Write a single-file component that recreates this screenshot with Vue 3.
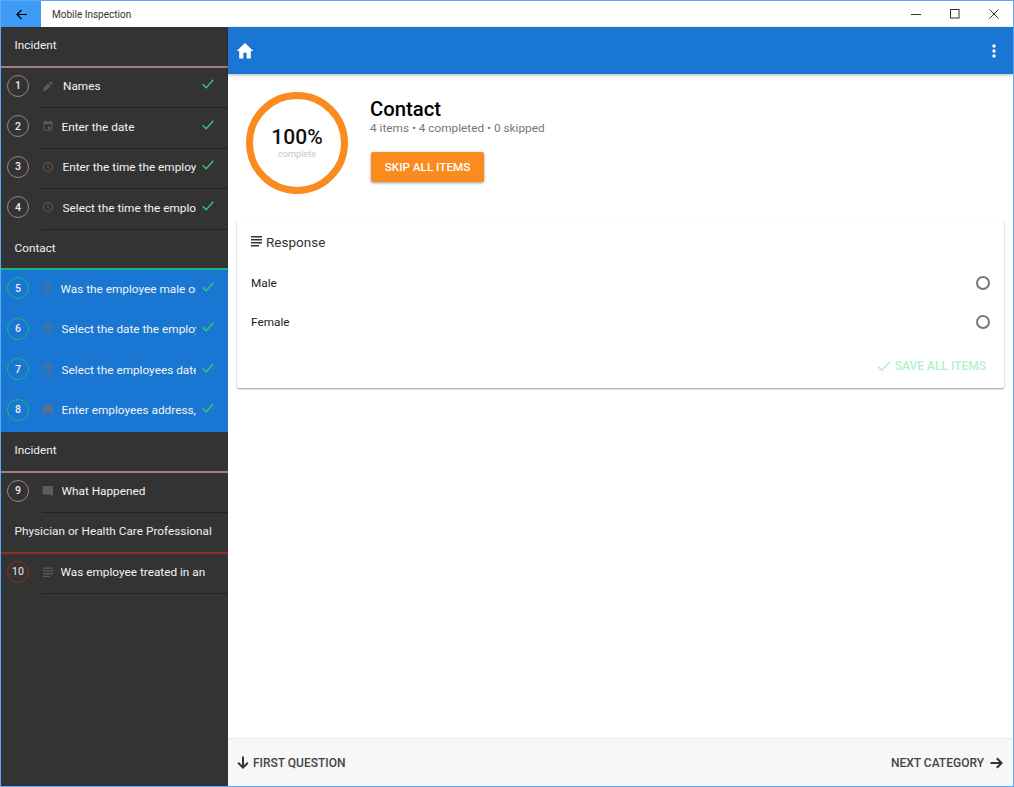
<script setup>
const groups = [
  {
    title: 'Incident',
    line: 'mauve',
    items: [
      { n: 1, icon: 'edit', text: 'Names', done: true },
      { n: 2, icon: 'date', text: 'Enter the date', done: true },
      { n: 3, icon: 'clock', text: 'Enter the time the employee', done: true },
      { n: 4, icon: 'clock', text: 'Select the time the employee', done: true },
    ],
  },
  {
    title: 'Contact',
    line: 'green',
    active: true,
    items: [
      { n: 5, icon: 'list', text: 'Was the employee male or female', done: true },
      { n: 6, icon: 'date', text: 'Select the date the employee', done: true },
      { n: 7, icon: 'date', text: 'Select the employees date of birth', done: true },
      { n: 8, icon: 'comment', text: 'Enter employees address, city', done: true },
    ],
  },
  {
    title: 'Incident',
    line: 'mauve',
    items: [{ n: 9, icon: 'comment', text: 'What Happened' }],
  },
  {
    title: 'Physician or Health Care Professional',
    line: 'red',
    items: [{ n: 10, icon: 'list', text: 'Was employee treated in an' }],
  },
]

const options = ['Male', 'Female']
</script>

<template>
  <div class="window">
    <header class="titlebar">
      <button class="back">
        <svg width="11" height="11" viewBox="0 0 11 11">
          <path d="M11 5.500H1M5.500 1 1 5.500 5.500 10" fill="none" stroke="#000" stroke-width="1.100" />
        </svg>
      </button>
      <span class="app-name">Mobile Inspection</span>
      <div class="controls">
        <svg width="10" height="10" viewBox="0 0 10 10"><path d="M0 5.500h10" stroke="#333" /></svg>
        <svg width="10" height="10" viewBox="0 0 10 10"><rect x=".5" y=".5" width="8.500" height="8.500" fill="none" stroke="#333" /></svg>
        <svg width="10" height="10" viewBox="0 0 10 10"><path d="M.5.5l9 9M9.500.5l-9 9" stroke="#333" /></svg>
      </div>
    </header>

    <div class="content">
      <aside class="sidebar">
        <section v-for="(group, i) in groups" :key="i" :class="{ active: group.active }">
          <h2 class="group-title" :class="group.line">{{ group.title }}</h2>
          <div v-for="item in group.items" :key="item.n" class="item" :class="group.line">
            <span class="num">{{ item.n }}</span>
            <div class="item-body">
              <span class="icon" :class="'ic-' + item.icon">
                <svg width="12" height="12" viewBox="0 0 24 24" fill="currentColor">
                  <path v-if="item.icon === 'edit'" d="M2 22l1-6 9-9 5 5-9 9zM14 5l3-3 5 5-3 3z" />
                  <path v-else-if="item.icon === 'date'" d="M17 13h-5v5h5zM16 1v2H8V1H6v2H5a2 2 0 0 0-2 2v14a2 2 0 0 0 2 2h14a2 2 0 0 0 2-2V5a2 2 0 0 0-2-2h-1V1zm3 18H5V8h14z" />
                  <path v-else-if="item.icon === 'clock'" d="M12 2a10 10 0 1 0 0 20 10 10 0 0 0 0-20zm0 18a8 8 0 1 1 0-16 8 8 0 0 1 0 16zm.5-13H11v6l5.200 3.200.8-1.300-4.500-2.700z" />
                  <path v-else-if="item.icon === 'list'" d="M2 3h20v2.500H2zM2 8.500h20V11H2zM2 14h20v2.500H2zM2 19.500h14V22H2z" />
                  <path v-else d="M21 2H3a2 2 0 0 0-2 2v13a2 2 0 0 0 2 2h14l5 4V4a1 1 0 0 0-1-2z" />
                </svg>
              </span>
              <span class="text">{{ item.text }}</span>
              <svg v-if="item.done" class="check" width="12" height="10" viewBox="0 0 12 10">
                <path d="M.7 5.300 4.200 8.800 11.300.8" fill="none" stroke="#2ecc71" stroke-width="1.400" />
              </svg>
            </div>
          </div>
        </section>
      </aside>

      <main class="main">
        <div class="appbar">
          <svg width="20" height="20" viewBox="0 0 24 24" fill="#fff"><path d="M10 21v-7h4v7h5v-9h3L12 2.500 2 12h3v9z" /></svg>
          <svg width="4" height="14" viewBox="0 0 4 14" fill="#fff">
            <circle cx="2" cy="2" r="1.700" /><circle cx="2" cy="7" r="1.700" /><circle cx="2" cy="12" r="1.700" />
          </svg>
        </div>

        <div class="scroll">
          <div class="summary">
            <div class="ring">
              <strong>100%</strong>
              <small>complete</small>
            </div>
            <div class="summary-info">
              <h1>Contact</h1>
              <p>4 items • 4 completed • 0 skipped</p>
              <button class="skip">SKIP ALL ITEMS</button>
            </div>
          </div>

          <div class="card">
            <div class="card-title">
              <svg width="11" height="11" viewBox="0 0 11 11" fill="#333">
                <path d="M0 0h11v1.500H0zM0 3h11v1.500H0zM0 6h11v1.500H0zM0 9h8v1.500H0z" />
              </svg>
              <span>Response</span>
            </div>
            <label v-for="opt in options" :key="opt" class="option">
              <span>{{ opt }}</span>
              <span class="radio"></span>
            </label>
            <div class="card-actions">
              <svg width="14" height="12" viewBox="0 0 14 12">
                <path d="M1 6.500 5 10.500 13 1.500" fill="none" stroke="#b4efc8" stroke-width="1.500" />
              </svg>
              <span>SAVE ALL ITEMS</span>
            </div>
          </div>
        </div>

        <footer class="footer">
          <button class="nav">
            <svg width="12" height="13" viewBox="0 0 12 13"><path d="M6 .5v11M1.200 6.800 6 11.600l4.800-4.800" fill="none" stroke="#333" stroke-width="2" /></svg>
            FIRST QUESTION
          </button>
          <button class="nav next">
            NEXT CATEGORY
            <svg width="13" height="12" viewBox="0 0 13 12"><path d="M.5 6h11M6.800 1.200 11.600 6l-4.800 4.800" fill="none" stroke="#333" stroke-width="2" /></svg>
          </button>
        </footer>
      </main>
    </div>
  </div>
</template>

<style>
html,
body {
  margin: 0;
  background: #fff;
}
</style>

<style scoped>
.window {
  box-sizing: border-box;
  width: 1014px;
  height: 787px;
  display: flex;
  flex-direction: column;
  border: 1px solid #5aaaf5;
  font-family: Roboto, "Liberation Sans", sans-serif;
  overflow: hidden;
}

.titlebar {
  flex: 0 0 26px;
  display: flex;
  align-items: center;
  background: #fff;
}

.back {
  width: 40px;
  height: 26px;
  padding: 0;
  border: 0;
  background: #3f9cf6;
  display: flex;
  align-items: center;
  justify-content: center;
}

.app-name {
  margin-left: 11px;
  font-size: 10px;
  color: #333;
}

.controls {
  margin-left: auto;
  padding-right: 14px;
  display: flex;
  gap: 29px;
  align-items: center;
}

.content {
  flex: 1;
  display: flex;
  min-height: 0;
}

.sidebar {
  flex: 0 0 227px;
  width: 227px;
  min-width: 0;
  overflow: hidden;
  background: #333;
  color: #fff;
}

.active {
  background: #1976d2;
}

.group-title {
  box-sizing: border-box;
  height: 40.500px;
  margin: 0;
  padding: 0 0 2px 13.500px;
  display: flex;
  align-items: center;
  background: #333;
  font-size: 11.800px;
  font-weight: 400;
  color: #f0f0f0;
  border-bottom: 2px solid transparent;
}

.group-title.mauve {
  border-bottom-color: #9c8088;
}

.group-title.green {
  border-bottom-color: #17b978;
}

.group-title.red {
  border-bottom-color: #8a3418;
}

.item {
  height: 40.500px;
  display: flex;
  align-items: center;
}

.num {
  box-sizing: border-box;
  flex: none;
  width: 22px;
  height: 22px;
  margin: -4px 13px 0 6px;
  display: flex;
  align-items: center;
  justify-content: center;
  border: 1.500px solid #9c8088;
  border-radius: 50%;
  font-size: 10.500px;
  font-weight: 500;
  color: #f0f0f0;
}

.item.green .num {
  border-color: #17b978;
}

.item.red .num {
  border-color: #8a3418;
  font-weight: 400;
}

.item-body {
  flex: 1;
  min-width: 0;
  height: 100%;
  display: flex;
  align-items: center;
  border-bottom: 1px solid #222;
  box-sizing: border-box;
}

.active .item-body {
  border-bottom-color: transparent;
}

.icon {
  flex: none;
  display: flex;
  color: #5c5c5c;
  margin-top: -3px;
}

.active .icon {
  color: #56718f;
}

.ic-edit {
  margin-right: 9px;
}

.ic-date {
  margin-right: 7.500px;
}

.ic-clock {
  margin-right: 8.500px;
}

.ic-list {
  margin-right: 6.500px;
}

.ic-comment {
  margin-right: 7.500px;
}

.text {
  flex: 1;
  min-width: 0;
  margin-top: -2px;
  overflow: hidden;
  white-space: nowrap;
  font-size: 11.800px;
  color: #f4f4f4;
}

.check {
  flex: none;
  margin: -6px 14px 0 6px;
}

.main {
  flex: 1;
  min-width: 0;
  display: flex;
  flex-direction: column;
  background: #fff;
}

.appbar {
  flex: 0 0 47px;
  display: flex;
  align-items: center;
  justify-content: space-between;
  padding: 0 17px 0 7px;
  background: #1976d2;
  box-shadow: 0 1px 3px rgba(0, 0, 0, 0.3);
  position: relative;
}

.scroll {
  flex: 1;
  padding: 18px 9px 0;
}

.summary {
  display: flex;
  gap: 22px;
  padding-left: 9px;
}

.ring {
  box-sizing: border-box;
  width: 102px;
  height: 102px;
  padding-bottom: 4px;
  display: flex;
  flex-direction: column;
  align-items: center;
  justify-content: center;
  border: 7px solid #f98b1f;
  border-radius: 50%;
}

.ring strong {
  font-size: 21px;
  line-height: 24px;
  font-weight: 500;
  color: #111;
}

.ring small {
  font-size: 9.200px;
  line-height: 9px;
  color: #c8c8c8;
}

.summary-info h1 {
  margin: 5px 0 0;
  font-size: 20.300px;
  line-height: 24px;
  font-weight: 500;
  color: #000;
}

.summary-info p {
  margin: 0;
  font-size: 11.800px;
  line-height: 14px;
  color: #777;
}

.skip {
  display: block;
  width: 113px;
  height: 30px;
  margin: 17px 0 0 1px;
  padding: 0;
  border: 0;
  border-radius: 2px;
  background: #f98b1f;
  color: #fff;
  font: 500 11.700px Roboto, "Liberation Sans", sans-serif;
  box-shadow: 0 1px 3px rgba(0, 0, 0, 0.4);
}

.card {
  height: 168px;
  box-sizing: border-box;
  margin-top: 26px;
  padding: 0 18px 0 14px;
  background: #fff;
  border-radius: 2px;
  box-shadow: 0 1px 2px rgba(0, 0, 0, 0.4);
}

.card-title {
  height: 43px;
  display: flex;
  align-items: center;
  gap: 4px;
  font-size: 13.500px;
  color: #333;
}

.option {
  height: 39.500px;
  display: flex;
  align-items: center;
  justify-content: space-between;
  font-size: 11.800px;
  color: #222;
}

.radio {
  box-sizing: border-box;
  width: 14px;
  height: 14px;
  margin-right: -4px;
  border: 2px solid #777;
  border-radius: 50%;
}

.card-actions {
  height: 47px;
  display: flex;
  align-items: center;
  justify-content: flex-end;
  gap: 4px;
  font-size: 12px;
  font-weight: 500;
  color: #b4efc8;
}

.footer {
  flex: 0 0 47px;
  display: flex;
  align-items: center;
  justify-content: space-between;
  padding: 0 10px 0 9px;
  background: #f7f7f7;
  border-top: 1px solid #eaeaea;
}

.nav {
  display: flex;
  align-items: center;
  gap: 4px;
  padding: 0;
  border: 0;
  background: none;
  color: #444;
  font: 500 12px Roboto, "Liberation Sans", sans-serif;
}

.next {
  gap: 6px;
}
</style>
